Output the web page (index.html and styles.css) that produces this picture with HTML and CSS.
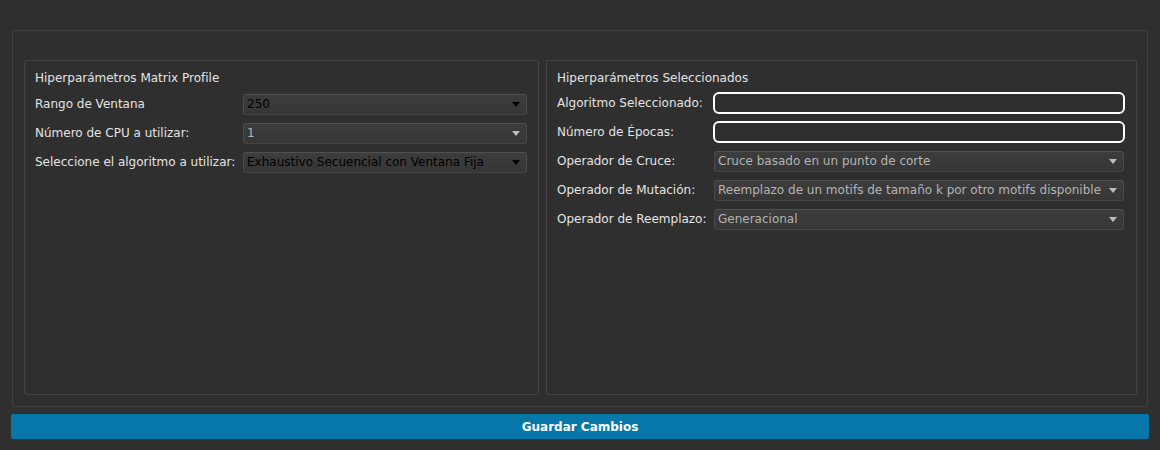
FILE: index.html
```html
<!DOCTYPE html>
<html lang="es">
<head>
<meta charset="utf-8">
<title>Hiperparámetros</title>
<link rel="stylesheet" href="styles.css">
</head>
<body>
<div class="page">
  <div class="frame">
    <section class="group group-left">
      <div class="group-title">Hiperparámetros Matrix Profile</div>
      <div class="form form-left">
        <label class="lbl">Rango de Ventana</label>
        <div class="combo combo-dark"><span class="combo-text">250</span><span class="arrow"></span></div>
        <label class="lbl">Número de CPU a utilizar:</label>
        <div class="combo combo-light"><span class="combo-text">1</span><span class="arrow"></span></div>
        <label class="lbl">Seleccione el algoritmo a utilizar:</label>
        <div class="combo combo-dark"><span class="combo-text">Exhaustivo Secuencial con Ventana Fija</span><span class="arrow"></span></div>
      </div>
    </section>
    <section class="group group-right">
      <div class="group-title">Hiperparámetros Seleccionados</div>
      <div class="form form-right">
        <label class="lbl">Algoritmo Seleccionado:</label>
        <div class="edit"></div>
        <label class="lbl">Número de Épocas:</label>
        <div class="edit"></div>
        <label class="lbl">Operador de Cruce:</label>
        <div class="combo combo-light inset"><span class="combo-text">Cruce basado en un punto de corte</span><span class="arrow"></span></div>
        <label class="lbl">Operador de Mutación:</label>
        <div class="combo combo-light inset"><span class="combo-text">Reemplazo de un motifs de tamaño k por otro motifs disponible</span><span class="arrow"></span></div>
        <label class="lbl">Operador de Reemplazo:</label>
        <div class="combo combo-light inset"><span class="combo-text">Generacional</span><span class="arrow"></span></div>
      </div>
    </section>
  </div>
  <button class="save">Guardar Cambios</button>
</div>
</body>
</html>
```

FILE: styles.css
```css
* { box-sizing: border-box; }
html, body {
  margin: 0;
  padding: 0;
  background: #2f2f2f;
  width: 1160px;
  height: 450px;
  overflow: hidden;
}
body {
  font-family: "DejaVu Sans", "Liberation Sans", sans-serif;
  font-size: 12px;
  color: #e4e4e4;
}
.page {
  padding: 30px 11px 0 11px;
  display: flex;
  flex-direction: column;
  gap: 7px;
}
.frame {
  margin: 0 1px;
  height: 377px;
  border: 1px solid #414141;
  border-radius: 2px;
  padding: 29px 11px 11px 11px;
  display: flex;
  gap: 7px;
}
.group {
  border: 1px solid #434343;
  border-radius: 2px;
  padding: 10px 11px 0 10px;
}
.group-left { flex: 0 0 515px; }
.group-right { flex: 0 0 591px; }
.group-title {
  line-height: 15px;
  height: 15px;
  white-space: nowrap;
}
.form {
  display: grid;
  grid-auto-rows: 22px;
  row-gap: 7px;
  align-items: center;
}
.form-left {
  margin-top: 7px;
  grid-template-columns: 208px 1fr;
}
.form-right {
  margin-top: 6px;
  grid-template-columns: 156px 1fr;
}
.lbl {
  white-space: nowrap;
  line-height: 15px;
}
.combo {
  height: 21px;
  border: 1px solid #4a4a4a;
  border-top-color: #505050;
  border-bottom-color: #454545;
  border-radius: 3px;
  background: linear-gradient(#3d3d3d, #363636);
  display: flex;
  align-items: center;
  padding: 0 6px 0 3px;
  white-space: nowrap;
}
.combo.inset { margin: 0 1px 0 1px; }
.combo-text {
  flex: 1 1 auto;
  min-width: 0;
}
.arrow {
  flex: 0 0 auto;
  width: 0;
  height: 0;
  border-left: 4.5px solid transparent;
  border-right: 4.5px solid transparent;
  border-top: 5px solid #111;
  margin-left: 4px;
}
.combo-dark .combo-text { color: #000000; }
.combo-dark .arrow { border-top-color: #000000; }
.combo-light .combo-text { color: #b4b4b4; }
.combo-light .arrow { border-top-color: #bdbdbd; }
.edit {
  height: 22px;
  border: 2px solid #ffffff;
  border-radius: 6px;
  background: #2f2f2f;
}
.save {
  height: 25px;
  width: 100%;
  border: none;
  border-radius: 2px;
  background: #0776a8;
  color: #ffffff;
  font-family: "DejaVu Sans", "Liberation Sans", sans-serif;
  font-size: 12px;
  font-weight: bold;
  padding: 0;
}
```
